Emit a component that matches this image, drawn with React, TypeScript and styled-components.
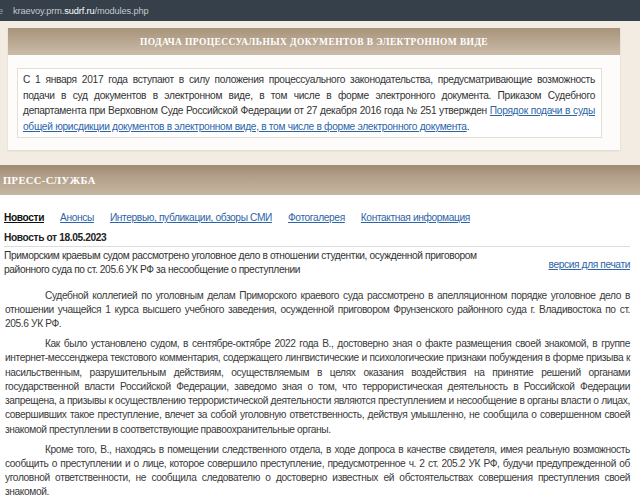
import React from "react"
import styled, { createGlobalStyle } from "styled-components"

const GlobalStyle = createGlobalStyle`
  html, body {
    margin: 0;
    padding: 0;
    background: #ffffff;
  }
  body {
    width: 640px;
    overflow: hidden;
    font-family: "Liberation Sans", Arial, sans-serif;
  }
`

const AddressBar = styled.div`
  height: 21px;
  background: #36404b;
  display: flex;
  align-items: center;
  font-family: "Liberation Sans", Arial, sans-serif;
  font-size: 9.2px;
  letter-spacing: -0.1px;
  color: #c3c8ce;
  overflow: hidden;
`
const CutGlyph = styled.span`
  flex: 0 0 15px;
  margin-left: -2px;
  color: #9aa1a9;
`
const Host = styled.span`
  color: #ffffff;
`

const TopArea = styled.div`
  background: #f2ece3;
  padding: 7px 20px 15px 8px;
`
const NoticeCard = styled.div`
  background: #fdfcfa;
  box-shadow: 0 1px 2px rgba(120, 100, 80, 0.15);
`
const BarTitle = styled.div<{ $align: "center" | "left" }>`
  background: linear-gradient(#a8937a 0%, #b7a58f 45%, #cbbca9 100%);
  color: #ffffff;
  font-family: "Liberation Serif", "Times New Roman", serif;
  font-weight: bold;
  text-transform: uppercase;
  display: flex;
  align-items: center;
  justify-content: ${(p) => (p.$align === "center" ? "center" : "flex-start")};
`
const NoticeHeader = styled(BarTitle)`
  height: 27px;
  font-size: 9.5px;
  letter-spacing: 0.38px;
`
const NoticeBody = styled.div`
  padding: 13px 18px 12px 9px;
`
const NoticeBox = styled.div`
  border: 1px solid #e4dfd6;
  background: #ffffff;
  padding: 3px 6px 3px 5px;
  font-size: 10.2px;
  letter-spacing: -0.3px;
  line-height: 15.6px;
  color: #333333;
  text-align: justify;
`
const Link = styled.a`
  color: #2d64a8;
  text-decoration: underline;
  cursor: pointer;
`

const PressBar = styled(BarTitle)`
  height: 30px;
  font-size: 10.5px;
  letter-spacing: 0.4px;
  padding-left: 3px;
  background: linear-gradient(#9f8a70 0%, #b3a08a 40%, #c6b6a1 100%);
`

const Content = styled.div`
  padding: 14.5px 10px 0 4px;
  font-size: 10.2px;
  letter-spacing: -0.38px;
  color: #333333;
`
const Tabs = styled.nav`
  display: flex;
  gap: 16px;
  line-height: 15px;
`
const Tab = styled.a<{ $active?: boolean }>`
  color: ${(p) => (p.$active ? "#111111" : "#2d64a8")};
  font-weight: ${(p) => (p.$active ? "bold" : "normal")};
  text-decoration: underline;
  cursor: pointer;
`
const NewsDate = styled.div`
  margin-top: 5px;
  font-weight: bold;
  color: #222222;
  line-height: 15px;
  padding-bottom: 1px;
  border-bottom: 1px solid #dcdcdc;
`
const TitleRow = styled.div`
  display: flex;
  justify-content: space-between;
  align-items: flex-start;
  margin-top: 2px;
`
const NewsTitle = styled.div`
  width: 500px;
  line-height: 14.5px;
  color: #333333;
`
const PrintLink = styled(Link)`
  margin-top: 8px;
  line-height: 15px;
`
const Article = styled.div`
  margin-top: 11px;
  padding-left: 1px;
`
const Para = styled.p`
  margin: 0 0 5.8px 0;
  text-indent: 40px;
  text-align: justify;
  line-height: 14.2px;
  color: #3a3a3a;
`

export default function App() {
  const paragraphs = [
    "Судебной коллегией по уголовным делам Приморского краевого суда рассмотрено в апелляционном порядке уголовное дело в отношении учащейся 1 курса высшего учебного заведения, осужденной приговором Фрунзенского районного суда г. Владивостока по ст. 205.6 УК РФ.",
    "Как было установлено судом, в сентябре-октябре 2022 года В., достоверно зная о факте размещения своей знакомой, в группе интернет-мессенджера текстового комментария, содержащего лингвистические и психологические признаки побуждения в форме призыва к насильственным, разрушительным действиям, осуществляемым в целях оказания воздействия на принятие решений органами государственной власти Российской Федерации, заведомо зная о том, что террористическая деятельность в Российской Федерации запрещена, а призывы к осуществлению террористической деятельности являются преступлением и несообщение в органы власти о лицах, совершивших такое преступление, влечет за собой уголовную ответственность, действуя умышленно, не сообщила о совершенном своей знакомой преступлении в соответствующие правоохранительные органы.",
    "Кроме того, В., находясь в помещении следственного отдела, в ходе допроса в качестве свидетеля, имея реальную возможность сообщить о преступлении и о лице, которое совершило преступление, предусмотренное ч. 2 ст. 205.2 УК РФ, будучи предупрежденной об уголовной ответственности, не сообщила следователю о достоверно известных ей обстоятельствах совершения преступления своей знакомой.",
  ]
  const tabs = [
    { name: "Новости", active: true },
    { name: "Анонсы" },
    { name: "Интервью, публикации, обзоры СМИ" },
    { name: "Фотогалерея" },
    { name: "Контактная информация" },
  ]
  return (
    <>
      <GlobalStyle />
      <AddressBar>
        <CutGlyph>e</CutGlyph>
        <span>kraevoy.prm.</span>
        <Host>sudrf.ru</Host>
        <span>/modules.php</span>
      </AddressBar>
      <TopArea>
        <NoticeCard>
          <NoticeHeader $align="center">
            Подача процессуальных документов в электронном виде
          </NoticeHeader>
          <NoticeBody>
            <NoticeBox>
              С 1 января 2017 года вступают в силу положения процессуального
              законодательства, предусматривающие возможность подачи в суд
              документов в электронном виде, в том числе в форме электронного
              документа. Приказом Судебного департамента при Верховном Суде
              Российской Федерации от 27 декабря 2016 года № 251 утвержден{" "}
              <Link>
                Порядок подачи в суды общей юрисдикции документов в электронном
                виде, в том числе в форме электронного документа
              </Link>
              .
            </NoticeBox>
          </NoticeBody>
        </NoticeCard>
      </TopArea>
      <PressBar $align="left">Пресс-служба</PressBar>
      <Content>
        <Tabs>
          {tabs.map((t) => (
            <Tab key={t.name} $active={t.active}>
              {t.name}
            </Tab>
          ))}
        </Tabs>
        <NewsDate>Новость от 18.05.2023</NewsDate>
        <TitleRow>
          <NewsTitle>
            Приморским краевым судом рассмотрено уголовное дело в отношении
            студентки, осужденной приговором районного суда по ст. 205.6 УК РФ
            за несообщение о преступлении
          </NewsTitle>
          <PrintLink>версия для печати</PrintLink>
        </TitleRow>
        <Article>
          {paragraphs.map((p, i) => (
            <Para key={i}>{p}</Para>
          ))}
        </Article>
      </Content>
    </>
  )
}
